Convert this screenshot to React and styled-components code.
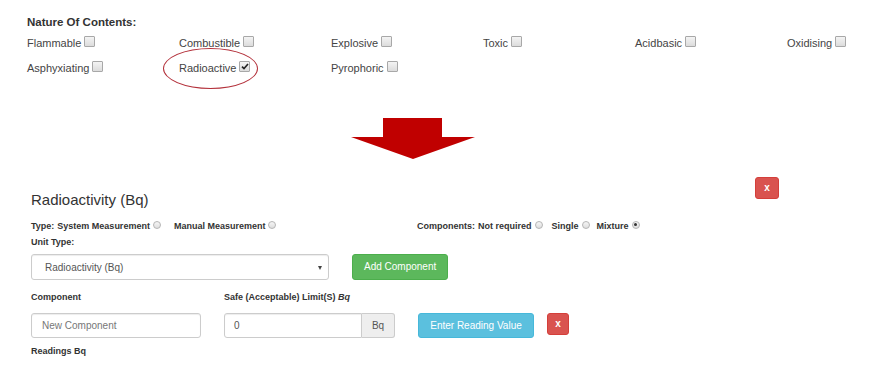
import React from 'react';
import styled, { createGlobalStyle } from 'styled-components';

const GlobalStyle = createGlobalStyle`
  html, body {
    margin: 0;
    padding: 0;
    background: #fff;
  }
  body {
    font-family: "Liberation Sans", Arial, sans-serif;
    color: #333;
  }
`;

const Page = styled.div`
  width: 870px;
  height: 383px;
  overflow: hidden;
`;

const TopSection = styled.section`
  padding: 15px 0 0 27px;
`;

const Heading = styled.div`
  font-size: 11.5px;
  font-weight: bold;
  line-height: 14px;
  margin-bottom: 7px;
`;

const OptionGrid = styled.div`
  display: grid;
  grid-template-columns: repeat(6, 152px);
  row-gap: 11px;
`;

const Option = styled.label`
  position: relative;
  display: flex;
  align-items: center;
  gap: 3px;
  font-size: 11px;
  line-height: 14px;
  color: #444;
`;

const Box = styled.span`
  display: inline-flex;
  align-items: center;
  justify-content: center;
  width: 9px;
  height: 9px;
  margin-top: -3px;
  border: 1px solid #a8a8a8;
  border-radius: 1px;
  background: linear-gradient(#f4f4f4, #dcdcdc);
`;

const Circle = styled.span`
  position: absolute;
  left: -16px;
  top: -13px;
  width: 95px;
  height: 41px;
  border: 1px solid #b3303a;
  border-radius: 50%;
  box-sizing: border-box;
  pointer-events: none;
`;

const ArrowWrap = styled.div`
  margin: 43px 0 0 350px;
  height: 41px;
  line-height: 0;
`;

const Panel = styled.section`
  width: 748px;
  padding: 18px 0 0 31px;
`;

const HeaderRow = styled.div`
  display: flex;
  justify-content: space-between;
  align-items: flex-start;
`;

const Title = styled.h4`
  margin: 0;
  padding-top: 13px;
  font-size: 15px;
  font-weight: normal;
  line-height: 20px;
  color: #333;
`;

const Btn = styled.button`
  display: inline-flex;
  align-items: center;
  justify-content: center;
  box-sizing: border-box;
  height: ${p => p.h || 26}px;
  width: ${p => (p.w ? p.w + 'px' : 'auto')};
  padding: 0 ${p => (p.w ? 0 : 11)}px;
  border: 1px solid ${p => p.border};
  border-radius: 3px;
  background: ${p => p.bg};
  color: #fff;
  font-family: "Liberation Sans", Arial, sans-serif;
  font-size: 10px;
  font-weight: ${p => (p.bold ? 'bold' : 'normal')};
  line-height: 1;
  cursor: pointer;
`;

const TypeRow = styled.div`
  display: flex;
  margin-top: 10px;
  line-height: 12px;
`;

const Group = styled.div`
  display: flex;
  align-items: center;
  width: ${p => (p.w ? p.w + 'px' : 'auto')};
`;

const Label = styled.span`
  font-size: 9px;
  font-weight: bold;
  line-height: 12px;
  color: #333;
  margin-right: ${p => p.mr || 0}px;
`;

const Radio = styled.span`
  display: inline-block;
  position: relative;
  width: 6px;
  height: 6px;
  border: 1px solid #b5b5b5;
  border-radius: 50%;
  background: linear-gradient(#f6f6f6, #dedede);
  margin: -3px ${p => p.mr || 0}px 0 3px;

  &::after {
    content: '';
    display: ${p => (p.checked ? 'block' : 'none')};
    position: absolute;
    left: 1.5px;
    top: 1.5px;
    width: 3px;
    height: 3px;
    border-radius: 50%;
    background: #333;
  }
`;

const LabelRow = styled.div`
  display: flex;
  margin-top: ${p => p.mt}px;
  line-height: 12px;
`;

const Col = styled.div`
  width: ${p => p.w}px;
  margin-right: ${p => p.mr || 0}px;
`;

const FieldRow = styled.div`
  display: flex;
  align-items: flex-start;
  margin-top: ${p => p.mt}px;
`;

const Select = styled.div`
  position: relative;
  box-sizing: border-box;
  width: 298px;
  height: 26px;
  margin-right: 23px;
  padding-left: 13px;
  display: flex;
  align-items: center;
  border: 1px solid #ccc;
  border-radius: 3px;
  box-shadow: inset 0 1px 1px rgba(0, 0, 0, 0.075);
  font-size: 10px;
  color: #555;
`;

const Caret = styled.span`
  position: absolute;
  right: 6px;
  top: 11px;
  width: 0;
  height: 0;
  border-left: 2px solid transparent;
  border-right: 2px solid transparent;
  border-top: 4px solid #444;
`;

const Input = styled.div`
  box-sizing: border-box;
  width: ${p => p.w}px;
  height: 25px;
  padding-left: ${p => p.pl || 10}px;
  display: flex;
  align-items: center;
  border: 1px solid #ccc;
  border-radius: ${p => p.radius || '3px'};
  box-shadow: inset 0 1px 1px rgba(0, 0, 0, 0.075);
  font-size: 10px;
  color: ${p => p.color || '#555'};
`;

const InputGroup = styled.div`
  display: flex;
  margin-right: 23px;
`;

const Addon = styled.div`
  box-sizing: border-box;
  width: 33px;
  height: 25px;
  display: flex;
  align-items: center;
  justify-content: center;
  border: 1px solid #ccc;
  border-left: 0;
  border-radius: 0 3px 3px 0;
  background: #eee;
  font-size: 10px;
  color: #555;
`;

const Spacer = styled.span`
  display: inline-block;
  width: ${p => p.w}px;
`;

const Check = () => (
  <svg width="8" height="7" viewBox="0 0 8 7">
    <path d="M1 3.6 L3 5.6 L7 1" fill="none" stroke="#222" strokeWidth="1.6" />
  </svg>
);

const options = [
  'Flammable', 'Combustible', 'Explosive', 'Toxic', 'Acidbasic', 'Oxidising',
  'Asphyxiating', 'Radioactive', 'Pyrophoric',
];

export default function App() {
  return (
    <Page>
      <GlobalStyle />
      <TopSection>
        <Heading>Nature Of Contents:</Heading>
        <OptionGrid>
          {options.map(name => (
            <Option key={name}>
              {name}
              <Box>{name === 'Radioactive' && <Check />}</Box>
              {name === 'Radioactive' && <Circle />}
            </Option>
          ))}
        </OptionGrid>
      </TopSection>

      <ArrowWrap>
        <svg width="126" height="41" viewBox="0 0 126 41">
          <path d="M33 0 H92 V19 H125 L63 41 L1 19 H33 Z" fill="#c00000" />
        </svg>
      </ArrowWrap>

      <Panel>
        <HeaderRow>
          <Title>Radioactivity (Bq)</Title>
          <Btn w={24} h={22} bg="#d9534f" border="#d43f3a" bold>x</Btn>
        </HeaderRow>

        <TypeRow>
          <Group w={386}>
            <Label mr={3}>Type:</Label>
            <Label>System Measurement</Label>
            <Radio mr={13} />
            <Label>Manual Measurement</Label>
            <Radio />
          </Group>
          <Group>
            <Label mr={3}>Components:</Label>
            <Label>Not required</Label>
            <Radio mr={9} />
            <Label>Single</Label>
            <Radio mr={7} />
            <Label>Mixture</Label>
            <Radio checked />
          </Group>
        </TypeRow>

        <LabelRow mt={4}>
          <Label>Unit Type:</Label>
        </LabelRow>

        <FieldRow mt={6}>
          <Select>
            Radioactivity (Bq)
            <Caret />
          </Select>
          <Btn bg="#5cb85c" border="#4cae4c">Add Component</Btn>
        </FieldRow>

        <LabelRow mt={9}>
          <Col w={170} mr={23}><Label>Component</Label></Col>
          <Col w={200}>
            <Label>Safe (Acceptable) Limit(S) <i>Bq</i></Label>
          </Col>
        </LabelRow>

        <FieldRow mt={10}>
          <Input w={170} color="#777">New Component</Input>
          <Spacer w={23} />
          <InputGroup>
            <Input w={138} pl={9} radius="3px 0 0 3px">0</Input>
            <Addon>Bq</Addon>
          </InputGroup>
          <Btn w={116} h={25} bg="#5bc0de" border="#46b8da">Enter Reading Value</Btn>
          <Spacer w={13} />
          <Btn w={22} h={22} bg="#d9534f" border="#d43f3a" bold>x</Btn>
        </FieldRow>

        <LabelRow mt={7}>
          <Label>Readings Bq</Label>
        </LabelRow>
      </Panel>
    </Page>
  );
}
